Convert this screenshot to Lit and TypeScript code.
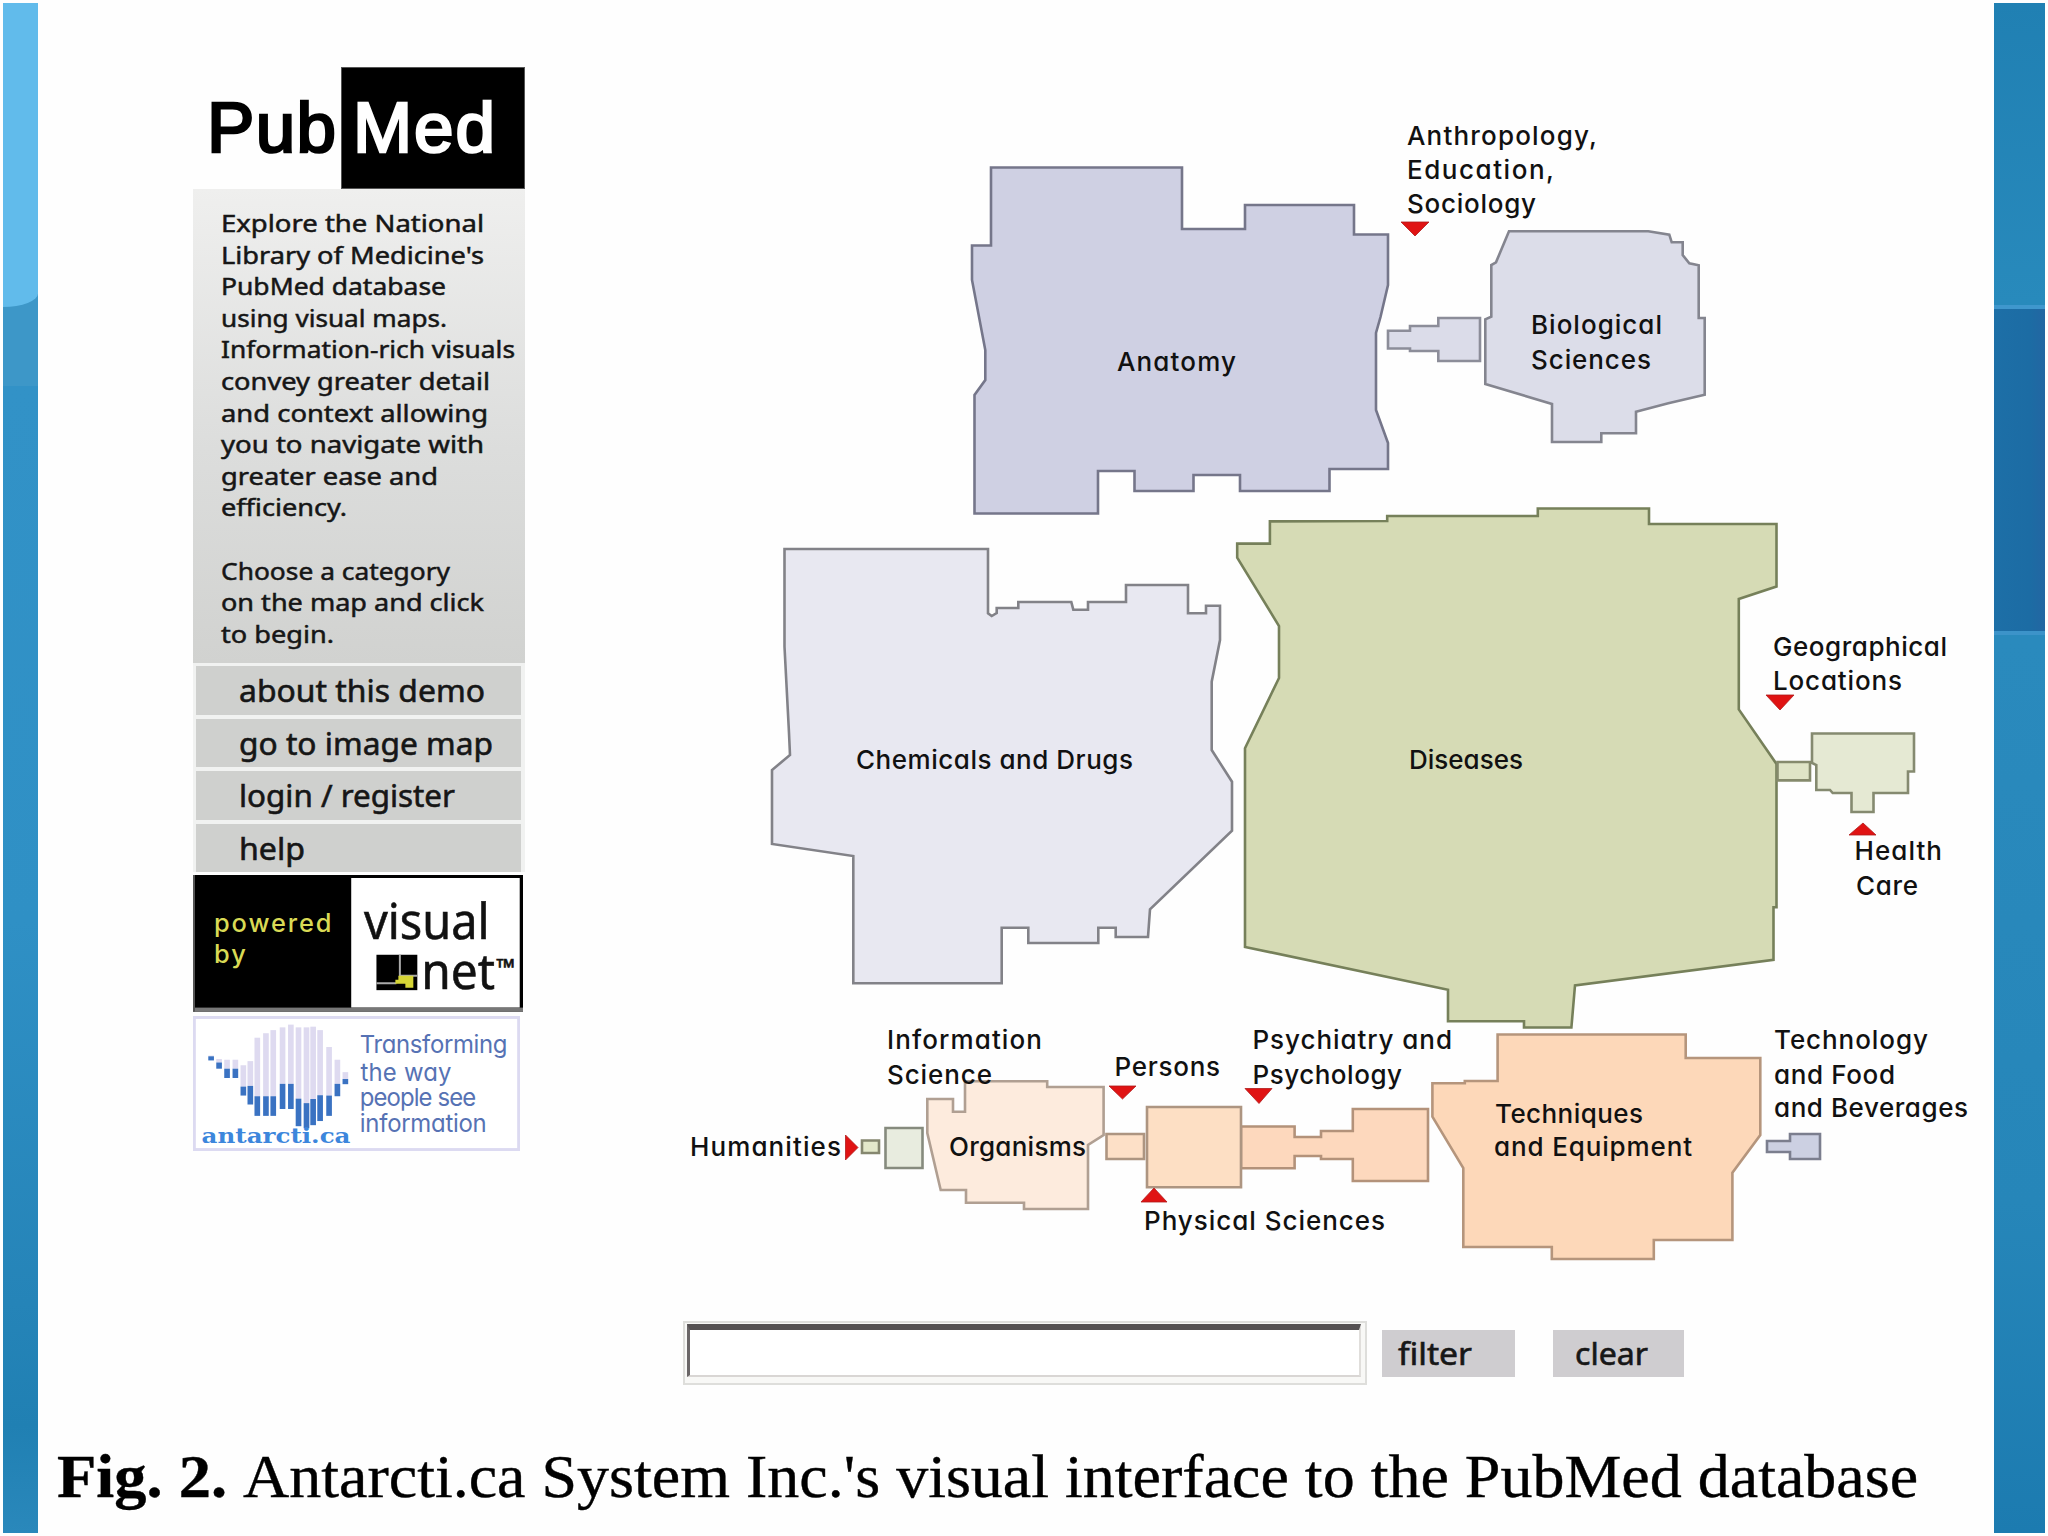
import { LitElement, html, css, svg } from "lit";
import { customElement, property } from "lit/decorators.js";

/** One line of text that fills the given width, by tracking or by stretching. */
@customElement("fit-text")
class FitText extends LitElement {
  @property({ type: Number }) width = 0;
  @property() text = "";
  @property({ type: Boolean }) stretch = false;

  static styles = css`
    :host { display: block; white-space: pre; }
    .line { display: inline-block; transform-origin: 0 50%; }
  `;

  updated() {
    const line = this.renderRoot.querySelector(".line") as HTMLElement;
    line.style.letterSpacing = "0px";
    line.style.transform = "none";
    const natural = line.getBoundingClientRect().width;
    if (!natural) return;
    if (this.stretch) {
      line.style.transform = `scaleX(${(this.width / natural).toFixed(4)})`;
    } else {
      const gap = (this.width - natural) / Math.max(1, this.text.length - 1);
      line.style.letterSpacing = `${gap.toFixed(3)}px`;
    }
  }

  render() {
    return html`<span class="line">${this.text}</span>`;
  }
}

const intro: [string, number][] = [
  ["Explore the National", 263],
  ["Library of Medicine's", 263],
  ["PubMed database", 225],
  ["using visual maps.", 226],
  ["Information-rich visuals", 294],
  ["convey greater detail", 269],
  ["and context allowing", 267],
  ["you to navigate with", 263],
  ["greater ease and", 217],
  ["efficiency.", 126],
  ["", 0],
  ["Choose a category", 229],
  ["on the map and click", 263],
  ["to begin.", 113],
];

const menu: [string, number][] = [
  ["about this demo", 246],
  ["go to image map", 254],
  ["login / register", 216],
  ["help", 66],
];

@customElement("side-bar")
class SideBar extends LitElement {
  static styles = css`
    :host { display: flex; flex-direction: column; width: 332px; color: #161616; font-family: "Noto Sans", "Open Sans", sans-serif; }
    .logo { display: flex; height: 122px; justify-content: flex-end; font: 400 71px/122px "Liberation Sans", Arial, sans-serif; }
    .pub { width: 134px; color: #000; -webkit-text-stroke: 2.6px #000; }
    .med { width: 184px; box-sizing: border-box; padding-left: 12px; background: #000; color: #fff; outline: 1px solid #555; outline-offset: -1px; -webkit-text-stroke: 2.6px #fff; }
    .intro { height: 474px; box-sizing: border-box; padding: 18px 0 0 28px; background: linear-gradient(#efefee, #dcdddc 55%, #d1d2d0); font-size: 24px; line-height: 31.6px; }
    .intro fit-text { height: 31.6px; -webkit-text-stroke: 0.5px #161616; }
    .menu { display: flex; flex-direction: column; gap: 4px; padding: 3px 4px 0 3px; background: #f1f2f1; }
    .item { height: 48.6px; padding-left: 43px; background: #cfd0ce; font-size: 31.5px; line-height: 48px; -webkit-text-stroke: 0.6px #161616; }
    svg { display: block; }
    .net { margin-top: 3px; }
    .ant { margin-top: 4px; }
  `;

  render() {
    // x, top of the pale part, top of the blue part, bottom
    const bars = [
      [82, 1210, 1212, 1224], [106, 1220, 1230, 1248], [130, 1222, 1248, 1275], [155, 1222, 1248, 1275],
      [179, 1238, 1300, 1326], [200, 1226, 1298, 1352], [221, 1158, 1328, 1385], [247, 1145, 1328, 1385],
      [269, 1136, 1328, 1385], [297, 1128, 1292, 1365], [322, 1120, 1292, 1365], [345, 1128, 1335, 1415],
      [369, 1128, 1348, 1421], [389, 1126, 1336, 1412], [410, 1136, 1325, 1400], [437, 1185, 1326, 1385],
      [462, 1222, 1292, 1328], [486, 1258, 1278, 1293],
    ];
    return html`
      <div class="logo">
        <fit-text class="pub" text="Pub" width="129"></fit-text>
        <div class="med"><fit-text text="Med" width="142"></fit-text></div>
      </div>
      <div class="intro">${intro.map(([t, w]) => html`<fit-text stretch .text=${t} .width=${w}></fit-text>`)}</div>
      <div class="menu">
        ${menu.map(([t, w]) => html`<div class="item"><fit-text stretch .text=${t} .width=${w}></fit-text></div>`)}
      </div>
      <svg class="net" width="330" height="136.6" viewBox="192 876 331 137">
        <rect x="192" y="876" width="331" height="137" fill="#000" />
        <rect x="350.7" y="879" width="169" height="130" fill="#fff" />
        <rect x="192" y="1009" width="331" height="4" fill="#777" />
        <rect x="192" y="876" width="2" height="137" fill="#555" />
        <g fill="#d9da55" font-family="Inter, sans-serif" font-size="25.5" font-weight="500" style="font-feature-settings:'cv11'">
          <text x="213" y="933.5" textLength="118">powered</text>
          <text x="213" y="964.5" textLength="32">by</text>
        </g>
        <g fill="#111" stroke="#111" stroke-width="0.6" font-family="Noto Sans, sans-serif" font-size="50">
          <text x="363.5" y="940" textLength="126" lengthAdjust="spacingAndGlyphs">visual</text>
          <text x="421" y="990.5" textLength="74" lengthAdjust="spacingAndGlyphs">net</text>
          <text x="496" y="977" font-size="24" font-weight="700" textLength="19" lengthAdjust="spacingAndGlyphs">™</text>
        </g>
        <rect x="376" y="956" width="41" height="35.5" fill="#000" />
        <path d="M399.5 956v21h18M376 984.5h20" stroke="#aaa" stroke-width="2" fill="none" />
        <path d="M398 977h15v12h-8v-4h-10v-4h3z" fill="#d6d536" />
      </svg>
      <svg class="ant" width="327" height="135" viewBox="36 1095 984 392" preserveAspectRatio="none">
        <rect x="40" y="1099" width="976" height="384" fill="#fff" stroke="#dcdaf1" stroke-width="9" />
        ${bars.map(([x, a, b, c]) => svg`
          <rect x=${x} y=${a} width="17" height=${b - a} fill="#dedaf0" />
          <rect x=${x} y=${b} width="17" height=${c - b} fill="#3a72c2" />`)}
        <text x="62" y="1464" font-family="DejaVu Serif, serif" font-weight="700" font-size="58" fill="#3c86dc"
          textLength="448" lengthAdjust="spacingAndGlyphs">antarcti.ca</text>
        <g fill="#5672b4" font-family="Inter, sans-serif" font-size="72" style="font-feature-settings:'cv11'">
          <text x="538" y="1201" textLength="444">Transforming</text>
          <text x="540" y="1283" textLength="274">the way</text>
          <text x="538" y="1356" textLength="350">people see</text>
          <text x="538" y="1433" textLength="382">information</text>
        </g>
      </svg>
    `;
  }
}

/** fill, stroke, outline points */
const regions: [string, string, string][] = [
  ["#cfd0e3", "#75768a", "991,167.5 1182,167.5 1182,229 1245,229 1245,205 1354,205 1354,234.5 1388,234.5 1388,285 1380.5,317 1376,333 1376,410 1388,443 1388,469 1329.5,469 1329.5,491 1240,491 1240,475 1193.5,475 1193.5,491 1134.5,491 1134.5,471 1098,471 1098,513.5 974.5,513.5 974.5,395 985.3,380 985.3,350 972,280 972,245.5 991,245.5"],
  ["#dbdce9", "#8c8d99", "1388,330.7 1410,330.7 1410,326 1438.3,326 1438.3,318 1480,318 1480,361 1438.3,361 1438.3,351 1410,351 1410,348.5 1388,348.5"],
  ["#dcdde9", "#84858f", "1509,231.3 1648.3,231.3 1669.3,234.7 1671.7,242.3 1682.7,242.3 1682.7,255 1689.3,263.3 1698.7,265.3 1698.7,318 1704.7,318 1704.7,394.7 1668.3,403.3 1636,411.7 1636,433.3 1601.3,433.3 1601.3,442 1552,442 1552,404 1485.3,384 1485.3,319.3 1491.3,316.7 1491.3,265 1496,262.3"],
  ["#e8e8f1", "#828288", "784.5,549 988,549 988,613.3 991.7,616 996.7,613 996.7,608 1018.3,608 1018.3,602 1071.3,602 1073.3,609.7 1088,609.7 1088,602 1126,602 1126,585 1188,585 1188,613.3 1206,613.3 1206,605.7 1220,605.7 1220,640 1211.7,681.7 1211.7,750 1232,781.7 1232,830.7 1150,909.3 1148,937 1115.7,937 1115.7,927.7 1098.3,927.7 1098.3,943 1028.3,943 1028.3,927.7 1001.7,927.7 1001.7,983.3 853.3,983.3 853.3,856 772,844 772,770 790,755 789,733 784.5,646.7"],
  ["#d6dbb5", "#76805a", "1237.2,543.6 1269.9,543.6 1269.9,521.4 1387.2,521 1387.2,516 1537.8,516 1537.8,508.5 1649,508.5 1649,524 1776.5,524 1776.5,586.5 1738.8,599 1738.8,709.4 1776.5,764 1776.5,907.3 1773.5,907.3 1773.5,959.8 1575,985.4 1571.4,1027.5 1524,1027.5 1524,1021.3 1448,1021.3 1448,989.8 1245,946.9 1245,748.2 1279,678 1279,626 1237.2,557.7"],
  ["#dfe4c6", "#858a6c", "1777.5,762 1810,762 1810,780.4 1777.5,780.4"],
  ["#e5e9d3", "#858a70", "1812,733.5 1914,733.5 1914,771.5 1908,771.5 1908,793 1873.5,793 1873.5,812 1851.5,812 1851.5,793 1832.7,793 1830,790 1816.3,790 1816.3,765 1812,763"],
  ["#e3e8ca", "#85876f", "862,1140.5 879,1140.5 879,1153 862,1153"],
  ["#e8ecdf", "#868b7e", "885.5,1128 922.5,1128 922.5,1168 885.5,1168"],
  ["#fdebdd", "#b09f92", "927.3,1099 953,1099 953,1111.7 965,1111.7 965,1081.3 1047.2,1081.3 1047.2,1087 1103.6,1087 1103.6,1135 1088,1145 1088,1209 1024,1209 1024,1202.7 966,1202.7 966,1190 940.7,1190 927.3,1133"],
  ["#fde0c7", "#ad9581", "1106.5,1134 1144,1134 1144,1159 1106.5,1159"],
  ["#fdd8bd", "#b3927a", "1241,1126.5 1294.6,1126.5 1294.6,1137 1321,1137 1321,1131 1352.8,1131 1352.8,1109 1428,1109 1428,1181 1352.8,1181 1352.8,1159 1321,1159 1321,1156 1294.6,1156 1294.6,1168.3 1241,1168.3"],
  ["#fddfc4", "#ad9581", "1147,1107 1241,1107 1241,1187.3 1147,1187.3"],
  ["#fdd8b9", "#b5957c", "1432.4,1083.3 1464.8,1083.3 1464.8,1081 1497.6,1081 1497.6,1034.5 1685.7,1034.5 1685.7,1058 1760.3,1058 1760.3,1135 1732.4,1172.7 1732.4,1240 1653.8,1240 1653.8,1259 1551.8,1259 1551.8,1247 1463.3,1247 1463.3,1168 1432.4,1116.7"],
  ["#ccd0e2", "#7b7e8e", "1767,1141 1790,1141 1790,1134 1820,1134 1820,1159 1790,1159 1790,1152 1767,1152"],
];

const arrows = [
  "1401,222 1429,222 1415,236",
  "1766,695 1794,695 1780,710",
  "1849,835 1876,835 1863,823",
  "1109,1086 1136,1086 1122.5,1099",
  "1245,1088.5 1272,1088.5 1259,1103.5",
  "1141,1202 1167,1202 1154,1188",
  "845.5,1135 845.5,1160 858,1147.5",
];

/** text, left, baseline, right */
const labels: [string, number, number, number][] = [
  ["Anthropology,", 1407, 145, 1597],
  ["Education,", 1407, 179, 1554],
  ["Sociology", 1407, 213, 1536],
  ["Anatomy", 1117, 371, 1236],
  ["Biological", 1531, 334, 1662],
  ["Sciences", 1531, 369, 1651],
  ["Chemicals and Drugs", 856, 769, 1133],
  ["Diseases", 1409, 769, 1523],
  ["Geographical", 1773, 656, 1947],
  ["Locations", 1773, 689.5, 1902],
  ["Health", 1854.5, 860, 1942],
  ["Care", 1856, 894.5, 1918],
  ["Information", 887, 1049, 1042],
  ["Science", 887, 1083.5, 992],
  ["Persons", 1114.5, 1075.5, 1220],
  ["Humanities", 690, 1156, 841],
  ["Organisms", 949, 1156, 1086],
  ["Physical Sciences", 1144, 1230, 1385],
  ["Psychiatry and", 1252.5, 1049, 1452],
  ["Psychology", 1252.5, 1083.5, 1402],
  ["Techniques", 1495, 1122.5, 1643],
  ["and Equipment", 1494, 1156, 1692],
  ["Technology", 1774, 1049, 1928],
  ["and Food", 1774, 1083.5, 1895],
  ["and Beverages", 1774, 1116.5, 1968],
];

@customElement("category-map")
class CategoryMap extends LitElement {
  static styles = css`
    :host { display: block; }
    svg { display: block; }
    .region { stroke-width: 2.6; stroke-linejoin: miter; }
    .arrow { fill: #e01313; stroke: #b01a1a; stroke-width: 0.8; }
    .label { font: 500 26px Inter, "Liberation Sans", sans-serif; font-feature-settings: "cv11"; fill: #111; }
  `;

  render() {
    return html`<svg width="1330" height="1200" viewBox="660 100 1330 1200">
      ${regions.map(([f, s, p]) => svg`<polygon class="region" points=${p} fill=${f} stroke=${s} />`)}
      ${arrows.map((p) => svg`<polygon class="arrow" points=${p} />`)}
      ${labels.map(([t, x, y, r]) => svg`<text class="label" x=${x} y=${y} textLength=${r - x}>${t}</text>`)}
    </svg>`;
  }
}

@customElement("app-root")
class AppRoot extends LitElement {
  static styles = css`
    :host { display: block; width: 2048px; height: 1536px; background: #fff; overflow: hidden; }
    .slide { display: grid; grid-template-columns: 35px 1fr 51px; height: 1530px; padding: 3px; background: #fefefe; }
    .edge { display: flex; flex-direction: column; overflow: hidden; }
    .left { background: linear-gradient(#3d97c8 0 383px, #3292c7 383px, #2f90c5 60%, #2584b8 85%, #2080b3 93%, #2a88bb); }
    .cap { height: 304px; width: 70px; margin-left: -35px; background: #61bbeb; border-radius: 0 0 36px 36px / 0 0 14px 14px; }
    .right { background: linear-gradient(#2080b3, #288abc 300px, #2a8abd 640px, #2686b9 1200px, #1c7bb0); }
    .band { height: 322px; margin-top: 302px; border-top: 4px solid #3f97cd; border-bottom: 4px solid #3c93c9; background: linear-gradient(90deg, #1d6fa7, #1c6ca4 70%, #2366a2); }
    .body { display: flex; flex-direction: column; }
    .main { display: flex; height: 1390px; }
    side-bar { margin: 64px 0 0 155px; }
    .work { display: flex; flex-direction: column; margin: 97px 0 0 135px; }
    .filter { display: flex; align-items: center; padding: 21px 0 0 23px; }
    .field { box-sizing: border-box; width: 684px; height: 64px; padding: 1px 4px 6px 2px; border: 2px solid #dededb; background: #f8f8f6; }
    .inner { box-sizing: border-box; height: 100%; border-top: 6px solid #555152; border-left: 3px solid #6a6667; border-bottom: 2px solid #d9d6d4; border-right: 2px solid #e0dedb; background: #fff; }
    .button { box-sizing: border-box; height: 47px; background: #cfcdd0; color: #171717; font: 30px/48px "Noto Sans", sans-serif; -webkit-text-stroke: 0.6px #171717; }
    .go { width: 133px; margin-left: 15px; padding-left: 16px; }
    .clear { width: 131px; margin-left: 38px; padding-left: 22px; }
    .caption { display: flex; margin: 46px 0 0 19px; font: 62px/74px "Liberation Serif", "Times New Roman", serif; color: #000; -webkit-text-stroke: 0.4px #000; }
    .fig { width: 186px; font-weight: 700; }
  `;

  render() {
    return html`
      <div class="slide">
        <div class="edge left"><div class="cap"></div></div>
        <div class="body">
          <div class="main">
            <side-bar></side-bar>
            <div class="work">
              <category-map></category-map>
              <div class="filter">
                <div class="field"><div class="inner"></div></div>
                <div class="button go"><fit-text stretch text="filter" width="74"></fit-text></div>
                <div class="button clear"><fit-text stretch text="clear" width="73"></fit-text></div>
              </div>
            </div>
          </div>
          <div class="caption">
            <fit-text stretch class="fig" text="Fig. 2." width="170"></fit-text>
            <fit-text stretch text="Antarcti.ca System Inc.'s visual interface to the PubMed database" width="1675"></fit-text>
          </div>
        </div>
        <div class="edge right"><div class="band"></div></div>
      </div>
    `;
  }
}
